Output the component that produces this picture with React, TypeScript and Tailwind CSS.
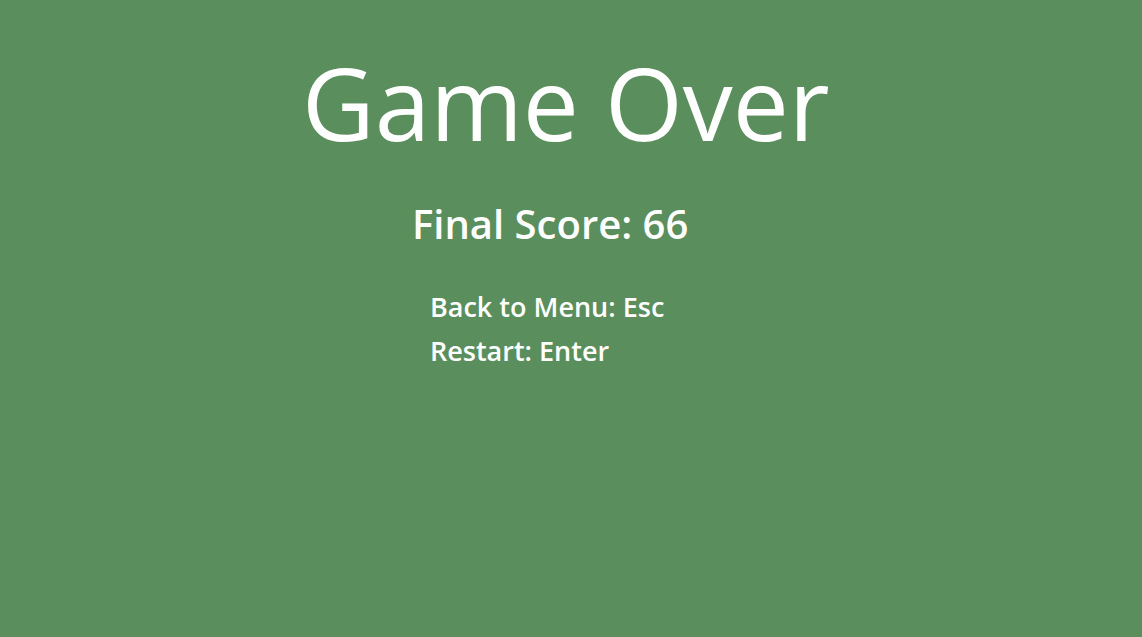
export default function App() {
  return (
    <div
      className="w-[1142px] h-[637px] bg-[#5b8e5d] text-white overflow-hidden"
      style={{ fontFamily: '"Open Sans", sans-serif' }}
    >
      <div className="pl-[302px] pt-[47px]">
        <h1 className="text-[100px] leading-[110px] font-normal">Game Over</h1>
      </div>
      <div className="pl-[412px] pt-[42px]">
        <p className="text-[40px] leading-[50px] font-semibold">Final Score: 66</p>
      </div>
      <div className="pl-[430px] pt-[40px] flex flex-col gap-[8px]">
        <p className="text-[27px] leading-[36px] font-semibold">Back to Menu: Esc</p>
        <p className="text-[27px] leading-[36px] font-semibold">Restart: Enter</p>
      </div>
    </div>
  );
}
